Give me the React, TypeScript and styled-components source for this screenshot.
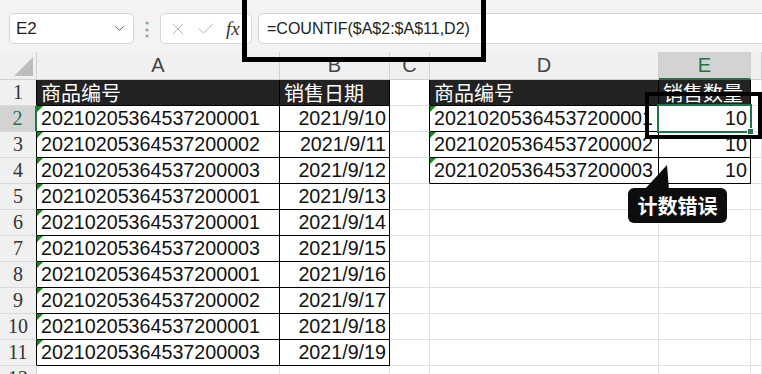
import React from 'react';
import styled, { createGlobalStyle } from 'styled-components';
import { ChevronDown, X, Check } from 'lucide-react';

const GlobalStyle = createGlobalStyle`
  html, body { margin: 0; padding: 0; background: #fff; }
  body { font-family: "Liberation Sans", Arial, sans-serif; overflow: hidden; }
`;

const GREEN = '#217346';
const GRID = '#e1e1e1';
const INK = '#000';

const Page = styled.div`
  position: relative;
  width: 762px;
  height: 374px;
  overflow: hidden;
  background: #fff;
`;

const Toolbar = styled.div`
  display: flex;
  align-items: stretch;
  height: 52px;
  box-sizing: border-box;
  padding: 13px 0 8px 9px;
  background: #f3f3f3;
  overflow: hidden;
`;

const Box = styled.div`
  box-sizing: border-box;
  border: 1px solid #d6d6d6;
  border-radius: 5px;
  background: #fff;
  display: flex;
  align-items: center;
`;

const NameBox = styled(Box)`
  width: 125px;
  justify-content: space-between;
  padding: 0 6px 0 6px;
  font-size: 17px;
  color: #222;
`;

const Dots = styled.div`
  width: 26px;
  display: flex;
  align-items: center;
  justify-content: center;
  color: #9a9a9a;
  font-size: 18px;
  font-weight: bold;
`;

const FxBox = styled(Box)`
  width: 92px;
  padding: 0 0 0 7px;
  gap: 8px;
  color: #b4b4b4;
`;

const Fx = styled.span`
  font-family: "Liberation Serif", serif;
  font-style: italic;
  font-size: 19px;
  color: #333;
  margin-left: 2px;
`;

const Formula = styled(Box)`
  flex: 1;
  margin-left: 6px;
  margin-right: -10px;
  padding-left: 8px;
  font-size: 16px;
  color: #222;
`;

const Sheet = styled.div`
  display: grid;
  grid-template-columns: 37px 243px 110px 40px 229px 92px 1fr;
  grid-template-rows: 28px repeat(12, 26px);
`;

const Corner = styled.div`
  background: #f0f0f0;
  border-right: 1px solid #d0d0d0;
  border-bottom: 1px solid #d0d0d0;
  box-sizing: border-box;
  display: flex;
  align-items: flex-end;
  justify-content: flex-end;
  padding: 0 3px 3px 0;
`;

const ColHead = styled.div<{ $sel?: boolean }>`
  box-sizing: border-box;
  background: ${p => (p.$sel ? '#d3d3d3' : '#f0f0f0')};
  border-right: 1px solid #d0d0d0;
  border-bottom: ${p => (p.$sel ? `2px solid ${GREEN}` : '1px solid #d0d0d0')};
  color: ${p => (p.$sel ? GREEN : '#444')};
  font-size: 20px;
  line-height: 27px;
  text-align: center;
`;

const RowHead = styled.div<{ $sel?: boolean; $edge: string }>`
  box-sizing: border-box;
  background: ${p => (p.$sel ? '#d3d3d3' : '#f0f0f0')};
  border-right: ${p => (p.$sel ? `2px solid ${GREEN}` : `1px solid ${p.$edge}`)};
  border-bottom: 1px solid #d8d8d8;
  color: ${p => (p.$sel ? GREEN : '#333')};
  font-family: "Liberation Serif", serif;
  font-size: 20px;
  line-height: 25px;
  text-align: center;
`;

const Cell = styled.div<{
  $right: string;
  $bottom: string;
  $head?: boolean;
  $align?: 'left' | 'right';
  $flag?: boolean;
  $sel?: boolean;
}>`
  position: relative;
  z-index: ${p => (p.$sel ? 2 : 'auto')};
  box-sizing: border-box;
  border-right: 1px solid ${p => p.$right};
  border-bottom: 1px solid ${p => p.$bottom};
  background: ${p => (p.$head ? '#222' : '#fff')};
  color: ${p => (p.$head ? '#fff' : '#111')};
  font-family: ${p =>
    p.$head ? '"Noto Sans CJK SC", sans-serif' : '"Liberation Sans", Arial, sans-serif'};
  font-size: ${p => (p.$head ? '20px' : '19.7px')};
  line-height: 25px;
  padding: 0 3px 0 4px;
  text-align: ${p => p.$align ?? 'left'};
  white-space: nowrap;

  &::before {
    content: '';
    display: ${p => (p.$flag ? 'block' : 'none')};
    position: absolute;
    left: 0;
    top: 0;
    border-top: 6px solid #138a13;
    border-right: 6px solid transparent;
  }
`;

const Selection = styled.div`
  position: absolute;
  top: -2px;
  left: -2px;
  right: -2px;
  bottom: -2px;
  border: 2px solid ${GREEN};
  pointer-events: none;
`;

const Handle = styled.div`
  position: absolute;
  right: -4px;
  bottom: -4px;
  width: 5px;
  height: 5px;
  background: ${GREEN};
  border: 1px solid #fff;
`;

const Frame = styled.div<{ $w: number }>`
  position: absolute;
  box-sizing: border-box;
  border: ${p => p.$w}px solid #000;
  z-index: 5;
`;

const Bubble = styled.div`
  position: absolute;
  left: 628px;
  top: 188px;
  width: 99px;
  height: 35px;
  border-radius: 6px;
  background: #0d0d0d;
  color: #fff;
  font-family: "Noto Sans CJK SC", sans-serif;
  font-weight: bold;
  font-size: 20px;
  line-height: 35px;
  text-align: center;
  z-index: 5;
`;

const Tail = styled.svg`
  position: absolute;
  left: 640px;
  top: 162px;
  z-index: 5;
`;

const ids = ['001', '002', '003', '001', '001', '003', '001', '002', '001', '003'];
const PREFIX = '20210205364537200';

export default function App() {
  const rows = Array.from({ length: 12 }, (_, i) => i + 1);
  return (
    <Page>
      <GlobalStyle />
      <Toolbar>
        <NameBox>
          <span>E2</span>
          <ChevronDown size={15} strokeWidth={1.5} color="#555" />
        </NameBox>
        <Dots>⋮</Dots>
        <FxBox>
          <X size={20} strokeWidth={1.2} />
          <Check size={20} strokeWidth={1.2} />
          <Fx>fx</Fx>
        </FxBox>
        <Formula>=COUNTIF($A$2:$A$11,D2)</Formula>
      </Toolbar>
      <Sheet>
        <Corner>
          <svg width="19" height="19" viewBox="0 0 19 19">
            <polygon points="19,0 19,19 0,19" fill="#bdbdbd" />
          </svg>
        </Corner>
        {['A', 'B', 'C', 'D', 'E', ''].map(l => (
          <ColHead key={l || 'F'} $sel={l === 'E'}>
            {l}
          </ColHead>
        ))}
        {rows.map(r => {
          const inLeft = r <= 11;
          const inRight = r <= 4;
          const leftB = inLeft ? INK : GRID;
          const rightB = inRight ? INK : GRID;
          return (
            <React.Fragment key={r}>
              <RowHead $sel={r === 2} $edge={inLeft ? INK : '#d0d0d0'}>
                {r}
              </RowHead>
              <Cell $right={leftB} $bottom={leftB} $head={r === 1} $flag={r >= 2 && r <= 11}>
                {r === 1 ? '商品编号' : r <= 11 ? PREFIX + ids[r - 2] : ''}
              </Cell>
              <Cell $right={leftB} $bottom={leftB} $head={r === 1} $align={r === 1 ? 'left' : 'right'}>
                {r === 1 ? '销售日期' : r <= 11 ? `2021/9/${r + 8}` : ''}
              </Cell>
              <Cell $right={rightB} $bottom={GRID} />
              <Cell $right={rightB} $bottom={rightB} $head={r === 1} $flag={r >= 2 && r <= 4}>
                {r === 1 ? '商品编号' : inRight ? PREFIX + '00' + (r - 1) : ''}
              </Cell>
              <Cell
                $right={rightB}
                $bottom={rightB}
                $head={r === 1}
                $align={r === 1 ? 'left' : 'right'}
                $sel={r === 2}
              >
                {r === 1 ? '销售数量' : inRight ? '10' : ''}
                {r === 2 && (
                  <Selection>
                    <Handle />
                  </Selection>
                )}
              </Cell>
              <Cell $right={GRID} $bottom={GRID} />
            </React.Fragment>
          );
        })}
      </Sheet>
      <Frame $w={5} style={{ left: 242, top: -10, width: 244, height: 72 }} />
      <Frame $w={4} style={{ left: 645, top: 92, width: 117, height: 47 }} />
      <Tail width="32" height="30" viewBox="0 0 32 30">
        <polygon points="4,28 27,3 29,28" fill="#0d0d0d" />
      </Tail>
      <Bubble>计数错误</Bubble>
    </Page>
  );
}
